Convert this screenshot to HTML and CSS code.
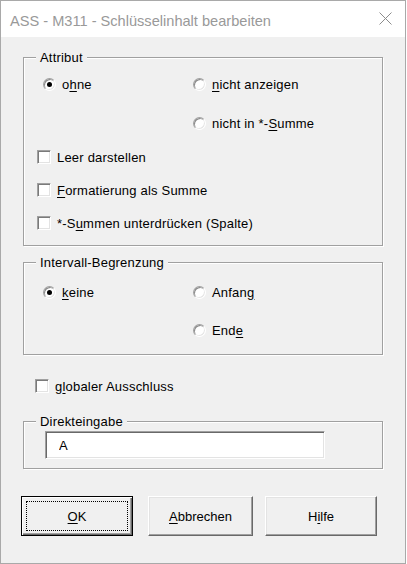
FILE: index.html
```html
<!DOCTYPE html>
<html lang="de">
<head>
<meta charset="utf-8">
<title>ASS - M311 - Schlüsselinhalt bearbeiten</title>
<link rel="stylesheet" href="styles.css">
</head>
<body>
<div class="window">
  <div class="titlebar">
    <span class="title">ASS - M311 - Schlüsselinhalt bearbeiten</span>
    <svg class="close" width="13" height="13" viewBox="0 0 13 13" aria-hidden="true">
      <path d="M0.5 0.5 L12.5 12.5 M12.5 0.5 L0.5 12.5" stroke="#8c8c8c" stroke-width="1" fill="none"/>
    </svg>
  </div>
  <div class="client">
    <div class="group g-attr">
      <span class="legend">Attribut</span>
      <div class="radio-grid">
        <label class="opt"><span class="radio checked"></span><span>o<u>h</u>ne</span></label>
        <label class="opt"><span class="radio"></span><span><u>n</u>icht anzeigen</span></label>
        <span></span>
        <label class="opt"><span class="radio"></span><span>nicht in *-<u>S</u>umme</span></label>
      </div>
      <div class="checks">
        <label class="opt"><span class="check"></span><span>Leer darstellen</span></label>
        <label class="opt"><span class="check"></span><span><u>F</u>ormatierung als Summe</span></label>
        <label class="opt"><span class="check"></span><span>*-S<u>u</u>mmen unterdrücken (Spalte)</span></label>
      </div>
    </div>

    <div class="group g-interval">
      <span class="legend">Intervall-Begrenzung</span>
      <div class="radio-grid">
        <label class="opt"><span class="radio checked"></span><span><u>k</u>eine</span></label>
        <label class="opt"><span class="radio"></span><span>Anfan<u>g</u></span></label>
        <span></span>
        <label class="opt"><span class="radio"></span><span>End<u>e</u></span></label>
      </div>
    </div>

    <label class="opt global"><span class="check"></span><span>g<u>l</u>obaler Ausschluss</span></label>

    <div class="group g-direct">
      <span class="legend">Direkteingabe</span>
      <input class="field" type="text" value="A">
    </div>

    <div class="buttons">
      <button class="btn btn-ok" type="button"><span><u>O</u>K</span></button>
      <button class="btn btn-cancel" type="button"><span><u>A</u>bbrechen</span></button>
      <button class="btn btn-help" type="button"><span>H<u>i</u>lfe</span></button>
    </div>
  </div>
</div>
</body>
</html>
```
FILE: styles.css
```css
html, body {
  margin: 0;
  padding: 0;
  background: #ffffff;
}

body {
  font-family: "Liberation Sans", Arial, sans-serif;
  font-size: 13px;
  letter-spacing: 0.2px;
  color: #000;
}

u {
  text-decoration-thickness: 1px;
  text-underline-offset: 2px;
}

.window {
  width: 406px;
  height: 564px;
  box-sizing: border-box;
  border: 1px solid #a9a9a9;
  background: #f0f0f0;
  display: flex;
  flex-direction: column;
}

.titlebar {
  flex: none;
  height: 36px;
  box-sizing: border-box;
  background: #fff;
  display: flex;
  align-items: center;
  justify-content: space-between;
  padding: 3px 13px 0 9px;
}

.title {
  font-size: 14.6px;
  letter-spacing: 0;
  color: #999999;
  white-space: nowrap;
}

.close {
  display: block;
  margin-top: -4px;
}

.client {
  flex: 1;
  padding: 20px 22px 0 22px;
  display: flex;
  flex-direction: column;
}

.group {
  position: relative;
  border: 1px solid #a0a0a0;
  box-shadow: 1px 1px 0 #fff, inset 1px 1px 0 #fff;
}

.legend {
  position: absolute;
  top: -8px;
  left: 12px;
  padding: 0 4px;
  line-height: 15px;
  background: #f0f0f0;
  white-space: nowrap;
}

.g-attr {
  padding: 16px 0 12px 13px;
}

.g-interval {
  margin-top: 16px;
  padding: 19px 0 14px 13px;
}

.g-interval .radio-grid {
  row-gap: 18px;
}

.radio-grid {
  margin-left: 6px;
  display: grid;
  grid-template-columns: 150px auto;
  grid-auto-rows: 20px;
  row-gap: 19px;
}

.checks {
  margin-top: 14px;
  display: flex;
  flex-direction: column;
  gap: 13px;
}

.opt {
  display: flex;
  align-items: center;
  gap: 6px;
  height: 20px;
  white-space: nowrap;
}

.radio {
  flex: none;
  width: 13px;
  height: 13px;
  box-sizing: border-box;
  border-radius: 50%;
  border: 1px solid;
  border-color: #a0a0a0 #ffffff #ffffff #a0a0a0;
  background: #fff;
  box-shadow: inset 1px 1px 0 #8a8a8a, inset -1px -1px 0 #e6e6e6;
  display: flex;
  align-items: center;
  justify-content: center;
}

.radio.checked::after {
  content: "";
  width: 5px;
  height: 5px;
  border-radius: 50%;
  background: #000;
}

.check {
  flex: none;
  width: 14px;
  height: 14px;
  box-sizing: border-box;
  border: 1px solid;
  border-color: #a0a0a0 #ffffff #ffffff #a0a0a0;
  background: #fff;
  box-shadow: inset 1px 1px 0 #7a7a7a, inset -1px -1px 0 #e3e3e3;
}

.global {
  margin-top: 21px;
  margin-left: 12px;
}

.g-direct {
  margin-top: 25px;
  padding: 9px 0 9px 21px;
}

.field {
  display: block;
  width: 280px;
  height: 28px;
  box-sizing: border-box;
  margin: 0;
  padding: 0 0 0 13px;
  border: 1px solid;
  border-color: #a0a0a0 #ffffff #ffffff #a0a0a0;
  box-shadow: inset 1px 1px 0 #696969, inset -1px -1px 0 #e3e3e3;
  background: #fff;
  font: inherit;
  color: #000;
  outline: none;
}

.buttons {
  margin-top: 27px;
  margin-left: -2px;
  display: flex;
}

.btn {
  position: relative;
  height: 40px;
  box-sizing: border-box;
  margin: 0;
  padding: 0;
  background: #f0f0f0;
  border: 1px solid;
  border-color: #ffffff #696969 #696969 #ffffff;
  box-shadow: inset -1px -1px 0 #a0a0a0, inset 1px 1px 0 #e3e3e3;
  font: inherit;
  color: #000;
  display: flex;
  align-items: center;
  justify-content: center;
}

.btn-ok {
  width: 112px;
  border-color: #000;
  box-shadow: inset 1px 1px 0 #fff, inset -1px -1px 0 #696969, inset -2px -2px 0 #a0a0a0;
}

.btn-ok::after {
  content: "";
  position: absolute;
  inset: 4px;
  border: 1px dotted #000;
}

.btn-cancel {
  width: 105px;
  margin-left: 15px;
}

.btn-help {
  width: 112px;
  margin-left: 12px;
}
```
